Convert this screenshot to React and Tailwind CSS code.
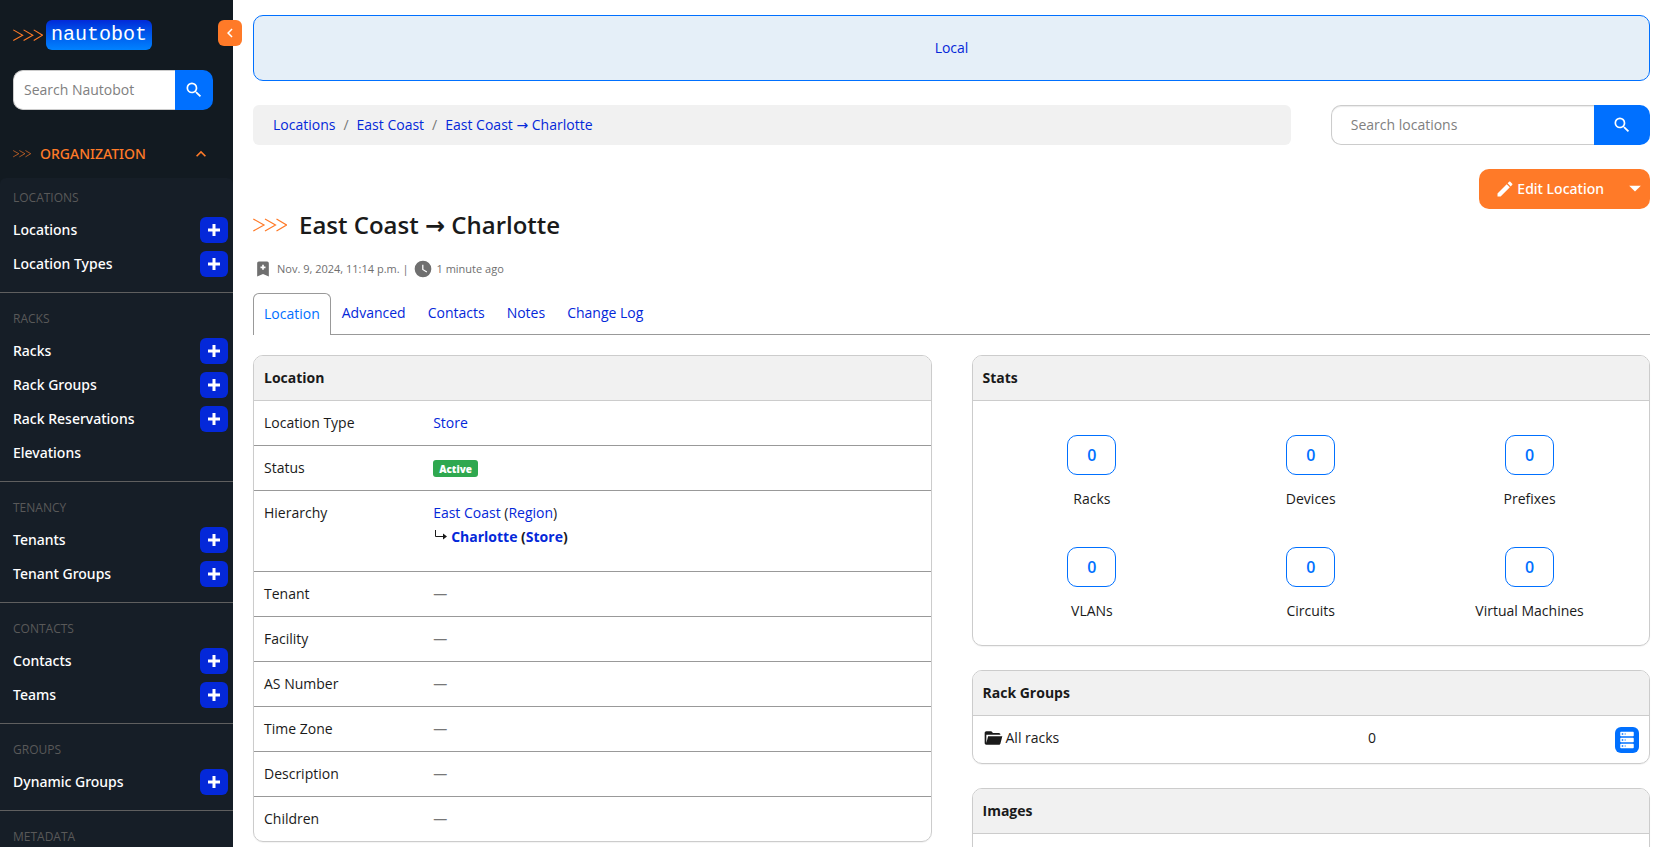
import React from "react";

const paths = {
  magnify:
    "M9.5,3A6.5,6.5 0 0,1 16,9.5C16,11.11 15.41,12.59 14.44,13.73L14.71,14H15.5L20.5,19L19,20.5L14,15.5V14.71L13.73,14.44C12.59,15.41 11.11,16 9.5,16A6.5,6.5 0 0,1 3,9.5A6.5,6.5 0 0,1 9.5,3M9.5,5C7,5 5,7 5,9.5C5,12 7,14 9.5,14C12,14 14,12 14,9.5C14,7 12,5 9.5,5Z",
  chevronLeft: "M15.41,16.58L10.83,12L15.41,7.41L14,6L8,12L14,18L15.41,16.58Z",
  chevronUp: "M7.41,15.41L12,10.83L16.59,15.41L18,14L12,8L6,14L7.41,15.41Z",
  plusThick: "M20 14H14V20H10V14H4V10H10V4H14V10H20V14Z",
  pencil:
    "M20.71,7.04C21.1,6.65 21.1,6 20.71,5.63L18.37,3.29C18,2.9 17.35,2.9 16.96,3.29L15.12,5.12L18.87,8.87M3,17.25V21H6.75L17.81,9.93L14.06,6.18L3,17.25Z",
  bookmarkPlus:
    "M17,3A2,2 0 0,1 19,5V21L12,18L5,21V5C5,3.89 5.9,3 7,3H17M11,7V9H9V11H11V13H13V11H15V9H13V7H11Z",
  clock:
    "M12,2A10,10 0 0,0 2,12A10,10 0 0,0 12,22A10,10 0 0,0 22,12A10,10 0 0,0 12,2M16.2,16.2L11,13V7H12.5V12.2L17,14.9L16.2,16.2Z",
  folderOpen:
    "M19,20H4C2.89,20 2,19.1 2,18V6C2,4.89 2.89,4 4,4H10L12,6H19A2,2 0 0,1 21,8H21L4,8V18L6.14,10H23.21L20.93,18.5C20.7,19.37 19.92,20 19,20Z",
  server:
    "M4,1H20A1,1 0 0,1 21,2V6A1,1 0 0,1 20,7H4A1,1 0 0,1 3,6V2A1,1 0 0,1 4,1M4,9H20A1,1 0 0,1 21,10V14A1,1 0 0,1 20,15H4A1,1 0 0,1 3,14V10A1,1 0 0,1 4,9M4,17H20A1,1 0 0,1 21,18V22A1,1 0 0,1 20,23H4A1,1 0 0,1 3,22V18A1,1 0 0,1 4,17M9,5H10V3H9V5M9,13H10V11H9V13M9,21H10V19H9V21M5,3V5H7V3H5M5,11V13H7V11H5M5,19V21H7V19H5Z",
  menuDown: "M5,8H19L12,15Z",
};

function Icon({ name, className = "size-5" }) {
  return (
    <svg viewBox="0 0 24 24" fill="currentColor" aria-hidden="true" className={`shrink-0 ${className}`}>
      <path fillRule="evenodd" d={paths[name]} />
    </svg>
  );
}

function Chevrons({ className }) {
  return (
    <svg viewBox="0 0 34 14" fill="none" stroke="#ff7a28" strokeWidth="1.2" aria-hidden="true" className={`shrink-0 ${className}`}>
      <path d="M0.3 1L11 7L0.3 13M12 1L22.5 7L12 13M23.5 1L33.5 7L23.5 13" />
    </svg>
  );
}

const sections = [
  { title: "LOCATIONS", items: ["Locations", "Location Types"] },
  { title: "RACKS", items: ["Racks", "Rack Groups", "Rack Reservations", "Elevations"] },
  { title: "TENANCY", items: ["Tenants", "Tenant Groups"] },
  { title: "CONTACTS", items: ["Contacts", "Teams"] },
  { title: "GROUPS", items: ["Dynamic Groups"] },
  { title: "METADATA", items: [] },
];

function Sidebar() {
  return (
    <div className="relative w-[233px] shrink-0 bg-[#121a21]">
      <button
        type="button"
        aria-label="Collapse sidebar"
        className="absolute top-5 -right-[9px] flex h-[26px] w-6 items-center justify-center rounded-md bg-[#ff7a28] text-white"
      >
        <Icon name="chevronLeft" className="size-[18px]" />
      </button>
      <nav className="flex h-full flex-col overflow-hidden">
        <a href="#home" className="mt-5 ml-[13px] flex items-center gap-[3px]">
          <Chevrons className="w-[30px]" />
          <span className="flex h-[30px] w-[106px] items-center justify-center rounded-md bg-linear-to-b from-[#0428d9] to-[#0082ff] font-['Liberation_Mono',monospace] text-xl leading-none text-white">
            nautobot
          </span>
        </a>
        <form className="mx-[13px] mt-5 mr-5 flex h-10 shrink-0">
          <input
            type="search"
            aria-label="Search Nautobot"
            placeholder="Search Nautobot"
            className="min-w-0 flex-1 rounded-l-[10px] border border-r-0 border-[#cccccc] bg-white px-[10px] placeholder:text-[#808080]"
          />
          <button type="submit" aria-label="Search" className="flex w-[38px] items-center justify-center rounded-r-[10px] bg-[#0070ff] text-white">
            <Icon name="magnify" />
          </button>
        </form>
        <button type="button" className="mt-5 flex h-12 w-full shrink-0 items-center gap-[9px] pr-[22px] pl-[13px] text-left font-['Noto_Sans',sans-serif] font-medium text-[#ff7a28]">
          <Chevrons className="w-[18px]" />
          <span className="flex-1">ORGANIZATION</span>
          <Icon name="chevronUp" />
        </button>
        <div className="flex-1 rounded-t-md bg-[#161e27]">
          {sections.map((section, i) => (
            <section key={section.title} className={`border-b border-[#5f5f5f] pb-[11px] pl-[13px] ${i === 0 ? "pt-2" : "pt-[14px]"}`}>
              <h2 className="mb-[3px] text-xs leading-6 text-[#595959]">{section.title}</h2>
              <ul>
                {section.items.map((item) => (
                  <li key={item} className="flex h-[34px] items-center justify-between pr-[5px] font-['Noto_Sans',sans-serif] font-medium text-white">
                    <a href="#list">{item}</a>
                    {item !== "Elevations" && (
                      <a href="#add" aria-label={`Add ${item}`} className="flex h-[26px] w-7 items-center justify-center rounded-md bg-[#0428d9]">
                        <Icon name="plusThick" className="size-[18px]" />
                      </a>
                    )}
                  </li>
                ))}
              </ul>
            </section>
          ))}
        </div>
      </nav>
    </div>
  );
}

function Panel({ title, children }) {
  return (
    <section className="overflow-hidden rounded-[10px] border border-[#cccccc] shadow-[0_1px_1px_rgba(0,0,0,0.05)]">
      <h2 className="border-b border-[#cccccc] bg-[#f1f1f1] p-[10px] leading-6 font-bold">{title}</h2>
      {children}
    </section>
  );
}

function Link({ children }) {
  return (
    <a href="#object" className="text-[#0428d9]">
      {children}
    </a>
  );
}

const dash = <span className="text-[#777777]">—</span>;

const rows = [
  ["Location Type", <Link>Store</Link>],
  ["Status", <span className="mt-1 flex h-[17px] w-fit items-center rounded-[3px] bg-[#2fa84f] px-[6px] text-[10px] leading-none font-extrabold text-white">Active</span>],
  [
    "Hierarchy",
    <div className="pb-3">
      <p>
        <Link>East Coast</Link> (<Link>Region</Link>)
      </p>
      <p className="flex gap-1 font-bold">
        <svg viewBox="0 0 14 24" fill="none" stroke="#1a1a1a" aria-hidden="true" className="h-6 w-[14px]">
          <path d="M2.5 5V11.5H12" />
          <path d="M10 8.5L14 11.5L10 14.5Z" fill="#1a1a1a" stroke="none" />
        </svg>
        <span>
          <Link>Charlotte</Link> (<Link>Store</Link>)
        </span>
      </p>
    </div>,
  ],
  ["Tenant", dash],
  ["Facility", dash],
  ["AS Number", dash],
  ["Time Zone", dash],
  ["Description", dash],
  ["Children", dash],
];

const stats = ["Racks", "Devices", "Prefixes", "VLANs", "Circuits", "Virtual Machines"];

export default function App() {
  return (
    <div className="flex h-screen overflow-hidden bg-white font-['Open_Sans','DejaVu_Sans',sans-serif] text-[14px] leading-6 text-[#1a1a1a]">
      <Sidebar />
      <main className="min-w-0 flex-1 overflow-y-auto pt-[15px] pr-3 pb-10 pl-5 [scrollbar-width:none]">
        <div className="flex h-[66px] items-center justify-center rounded-[10px] border border-[#0070ff] bg-[#e5eff8] text-[#0428d9]">
          Local
        </div>

        <div className="mt-6 grid grid-cols-4 gap-10">
          <nav aria-label="Breadcrumb" className="col-span-3 rounded-md bg-[#f1f1f1] px-5 py-2">
            <ol className="flex">
              <li><Link>Locations</Link></li>
              <li className="px-2 text-[#777777]">/</li>
              <li><Link>East Coast</Link></li>
              <li className="px-2 text-[#777777]">/</li>
              <li><Link>East Coast → Charlotte</Link></li>
            </ol>
          </nav>
          <form className="flex h-10">
            <input
              type="search"
              aria-label="Search locations"
              placeholder="Search locations"
              className="min-w-0 flex-1 rounded-l-[10px] border border-r-0 border-[#cccccc] px-[19px] shadow-[inset_0_1px_1px_rgba(0,0,0,0.08)] placeholder:text-[#808080]"
            />
            <button type="submit" aria-label="Search" className="flex w-14 items-center justify-center rounded-r-[10px] bg-[#0070ff] text-white">
              <Icon name="magnify" />
            </button>
          </form>
        </div>

        <div className="mt-6 flex items-start justify-between">
          <h1 className="flex items-center gap-3 pt-9 text-2xl leading-10 font-semibold">
            <Chevrons className="w-[34px]" />
            East Coast → Charlotte
          </h1>
          <div className="flex h-10 overflow-hidden rounded-[10px] bg-[#ff7a28] font-['Noto_Sans',sans-serif] font-medium text-white">
            <button type="button" className="flex items-center gap-[2px] px-4">
              <Icon name="pencil" />
              Edit Location
            </button>
            <button type="button" aria-label="More actions" className="flex w-[30px] items-center justify-center">
              <Icon name="menuDown" />
            </button>
          </div>
        </div>

        <p className="mt-3 flex h-6 items-center gap-1 text-[11px] text-[#6f6f6f]">
          <Icon name="bookmarkPlus" />
          <span>Nov. 9, 2024, 11:14 p.m. |</span>
          <Icon name="clock" />
          <span>1 minute ago</span>
        </p>

        <div role="tablist" className="mt-3 flex border-b border-[#999999]">
          <button role="tab" aria-selected="true" type="button" className="-mb-px h-[42px] rounded-t-md border border-b-0 border-[#999999] bg-white px-[10px] pb-[2px] text-[#0070ff]">
            Location
          </button>
          {["Advanced", "Contacts", "Notes", "Change Log"].map((tab) => (
            <button key={tab} role="tab" aria-selected="false" type="button" className="px-[11px] pb-[2px] text-[#0428d9]">
              {tab}
            </button>
          ))}
        </div>

        <div className="mt-5 grid grid-cols-2 items-start gap-10">
          <Panel title="Location">
            <table className="w-full table-fixed border-collapse">
              <tbody>
                {rows.map(([label, value]) => (
                  <tr key={label} className="border-b border-[#999999] align-top last:border-b-0">
                    <th scope="row" className="w-1/4 p-[10px] text-left font-normal">{label}</th>
                    <td className="p-[10px]">{value}</td>
                  </tr>
                ))}
              </tbody>
            </table>
          </Panel>

          <div className="flex flex-col gap-6">
            <Panel title="Stats">
              <div className="grid grid-cols-3 gap-y-9 px-[10px] pt-[34px] pb-[22px] text-center">
                {stats.map((stat) => (
                  <div key={stat} className="flex flex-col items-center gap-3">
                    <a href="#stat" aria-label={`0 ${stat}`} className="flex h-10 w-[49px] items-center justify-center rounded-[10px] border border-[#0070ff] text-base font-semibold text-[#0070ff]">
                      0
                    </a>
                    <span>{stat}</span>
                  </div>
                ))}
              </div>
            </Panel>

            <Panel title="Rack Groups">
              <table className="w-full table-fixed border-collapse">
                <tbody>
                  <tr className="align-top">
                    <td className="w-[57%] p-[10px]">
                      <span className="flex items-center gap-[3px]">
                        <Icon name="folderOpen" />
                        All racks
                      </span>
                    </td>
                    <td className="p-[10px]">0</td>
                    <td className="px-[10px] pt-[11px] pb-[10px]">
                      <a href="#elevations" aria-label="View elevations" className="ml-auto flex h-[26px] w-6 items-center justify-center rounded-md bg-[#0070ff] text-white">
                        <Icon name="server" className="size-[18px]" />
                      </a>
                    </td>
                  </tr>
                </tbody>
              </table>
            </Panel>

            <Panel title="Images">
              <div className="h-11" />
            </Panel>
          </div>
        </div>
      </main>
    </div>
  );
}
